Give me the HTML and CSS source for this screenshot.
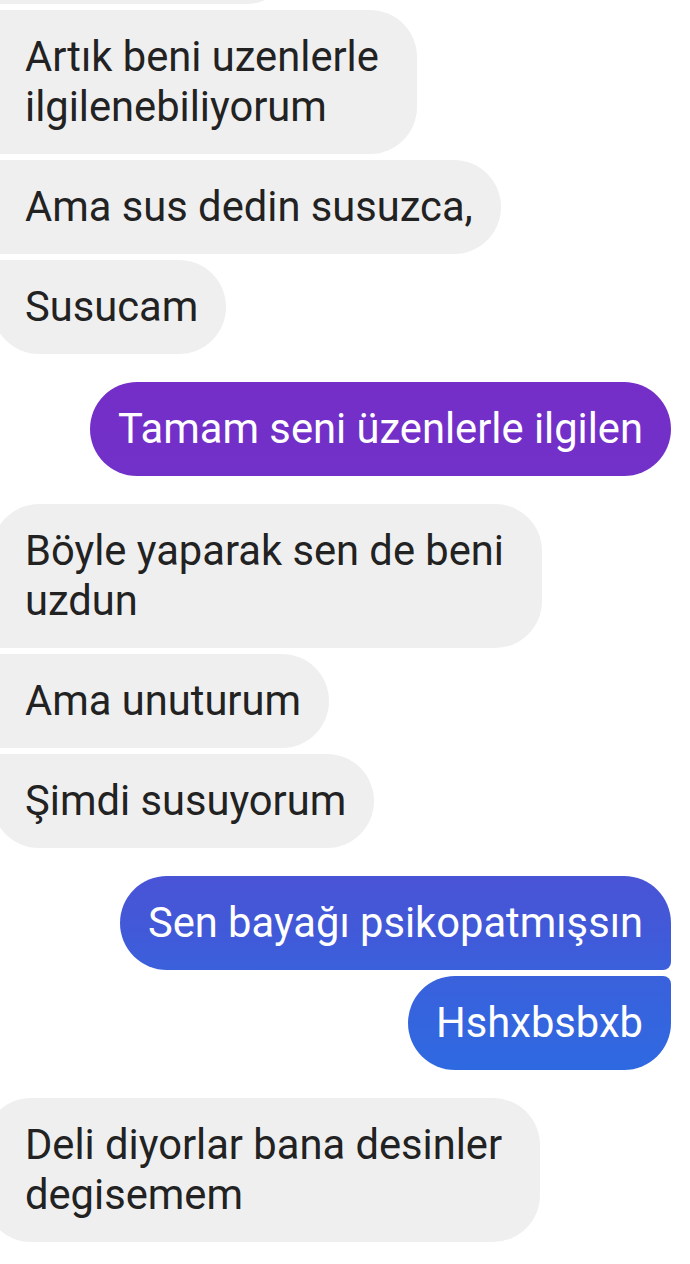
FILE: index.html
```html
<!DOCTYPE html>
<html lang="tr">
<head>
<meta charset="utf-8">
<title>Sohbet</title>
<link rel="stylesheet" href="styles.css">
</head>
<body>
<main class="chat">
  <section class="group in">
    <div class="msg cut" aria-hidden="true"></div>
    <div class="msg multi">Artık beni uzenlerle<br>ilgilenebiliyorum</div>
    <div class="msg">Ama sus dedin susuzca,</div>
    <div class="msg last">Susucam</div>
  </section>
  <section class="group out">
    <div class="msg single">Tamam seni üzenlerle ilgilen</div>
  </section>
  <section class="group in">
    <div class="msg multi first">Böyle yaparak sen de beni<br>uzdun</div>
    <div class="msg">Ama unuturum</div>
    <div class="msg last">Şimdi susuyorum</div>
  </section>
  <section class="group out">
    <div class="msg first">Sen bayağı psikopatmışsın</div>
    <div class="msg last">Hshxbsbxb</div>
  </section>
  <section class="group in">
    <div class="msg multi single">Deli diyorlar bana desinler<br>degisemem</div>
  </section>
</main>
</body>
</html>
```
FILE: styles.css
```css
html, body {
  margin: 0;
  padding: 0;
  background: #ffffff;
}

body {
  font-family: Roboto, "Noto Sans", "Liberation Sans", sans-serif;
  width: 690px;
  height: 1264px;
  overflow: hidden;
}

.chat {
  display: flex;
  flex-direction: column;
  gap: 28px;
  padding-top: 10px;
}

.group {
  display: flex;
  flex-direction: column;
  gap: 6px;
}

.msg {
  font-size: 41.7px;
  line-height: 50px;
  padding: 22px 28px;
  border-radius: 47px;
  white-space: nowrap;
  width: fit-content;
}

/* incoming */
.in .msg {
  align-self: flex-start;
  background: #efefef;
  color: #222222;
  margin-left: -8px;
  padding-left: 33px;
  border-top-left-radius: 6px;
  border-bottom-left-radius: 6px;
}

.in .msg.multi {
  padding-right: 38px;
}

.in .msg.first {
  border-top-left-radius: 47px;
}

.in .msg.last {
  border-bottom-left-radius: 47px;
}

.in .msg.single {
  border-radius: 47px;
  margin-left: -16px;
  padding-left: 41px;
}

.in .msg.cut {
  width: 240px;
  height: 50px;
  margin-top: -100px;
}

/* outgoing */
.out .msg {
  align-self: flex-end;
  margin-right: 19px;
  color: #ffffff;
  background: linear-gradient(180deg,
    #7a2bc8 0px,
    #752ec8 380px,
    #7131c9 480px,
    #4a53d5 870px,
    #4159d8 930px,
    #3a61dc 975px,
    #2e69e1 1070px) fixed;
}

.out .msg.first {
  border-bottom-right-radius: 8px;
}

.out .msg.last {
  border-top-right-radius: 8px;
}
```
